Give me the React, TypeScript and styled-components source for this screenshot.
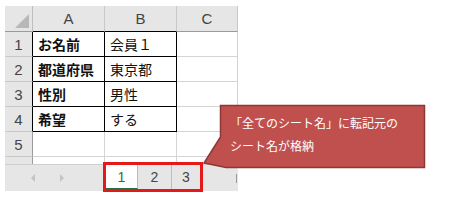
import styled, { createGlobalStyle } from 'styled-components';

const GlobalStyle = createGlobalStyle`
  html, body {
    margin: 0;
    padding: 0;
    background: #ffffff;
  }
`;

const COLUMNS = ['A', 'B', 'C'];

const ROWS: { label: string; values: string[] }[] = [
  { label: '1', values: ['お名前', '会員１', ''] },
  { label: '2', values: ['都道府県', '東京都', ''] },
  { label: '3', values: ['性別', '男性', ''] },
  { label: '4', values: ['希望', 'する', ''] },
  { label: '5', values: ['', '', ''] },
];

const SHEETS = [
  { name: '1', width: 32 },
  { name: '2', width: 34 },
  { name: '3', width: 28 },
];

const isBoxed = (row: number, col: number) => row < 4 && col < 2;

const App = () => {
  return (
    <>
      <GlobalStyle />
      <Page>
        <Sheet>
          <Grid>
            <CornerCell />
            {COLUMNS.map((col, c) => (
              <ColHeader key={col} $boxed={c < 2}>
                {col}
              </ColHeader>
            ))}

            {ROWS.map((row, r) => (
              <Row key={row.label} row={row} index={r} />
            ))}

            <PartialHeader />
            {COLUMNS.map((col) => (
              <PartialCell key={col} />
            ))}
          </Grid>

          <TabBar>
            <NavArea>
              <NavArrow $dir="left" />
              <NavArrow $dir="right" />
            </NavArea>
            <TabGroup>
              {SHEETS.map((sheet, i) => (
                <Tab key={sheet.name} $active={i === 0} $width={sheet.width}>
                  {sheet.name}
                </Tab>
              ))}
            </TabGroup>
            <TabFiller>
              <Splitter />
            </TabFiller>
          </TabBar>
        </Sheet>

        <Callout>
          <CalloutShape width="224" height="66" viewBox="0 0 224 66">
            <path
              d="M17.5 1.5 H221.5 V63.5 H23 L1 59 L17.5 33 Z"
              fill="#c0504d"
              stroke="#8c3836"
              strokeWidth="1.5"
              strokeLinejoin="miter"
            />
          </CalloutShape>
          <CalloutText>
            <CalloutLine>「全てのシート名」に転記元の</CalloutLine>
            <CalloutLine>シート名が格納</CalloutLine>
          </CalloutText>
        </Callout>
      </Page>
    </>
  );
};

const Row = ({ row, index }: { row: { label: string; values: string[] }; index: number }) => (
  <>
    <RowHeader $boxed={index < 4}>{row.label}</RowHeader>
    {row.values.map((value, c) => (
      <Cell key={c} $boxed={isBoxed(index, c)} $bold={c === 0}>
        {value}
      </Cell>
    ))}
  </>
);

const Page = styled.div`
  position: relative;
  width: 453px;
  height: 201px;
  padding: 6px 0 0 5px;
  box-sizing: border-box;
  overflow: hidden;
  font-family: 'Noto Sans CJK JP', 'Liberation Sans', sans-serif;
`;

const Sheet = styled.div`
  width: 233px;
  display: flex;
  flex-direction: column;
`;

const Grid = styled.div`
  display: grid;
  grid-template-columns: 28px 72px 72px 61px;
  grid-template-rows: 26px repeat(5, 25px) 7px;
`;

const HeaderBase = styled.div`
  box-sizing: border-box;
  background: #e6e6e6;
  color: #444444;
  font-family: 'Liberation Sans', 'Noto Sans CJK JP', sans-serif;
  font-size: 15px;
  display: flex;
  align-items: center;
  justify-content: center;
`;

const CornerCell = styled(HeaderBase)`
  position: relative;
  border-right: 1px solid #bdbdbd;
  border-bottom: 1px solid #9b9b9b;

  &::after {
    content: '';
    position: absolute;
    right: 3px;
    bottom: 3px;
    width: 14px;
    height: 14px;
    background: #b8b8b8;
    clip-path: polygon(100% 0, 100% 100%, 0 100%);
  }
`;

const ColHeader = styled(HeaderBase)<{ $boxed: boolean }>`
  border-right: 1px solid #c8c8c8;
  border-bottom: 1px solid ${({ $boxed }) => ($boxed ? '#000000' : '#9b9b9b')};
`;

const RowHeader = styled(HeaderBase)<{ $boxed: boolean }>`
  border-right: 1px solid ${({ $boxed }) => ($boxed ? '#000000' : '#9b9b9b')};
  border-bottom: 1px solid #c8c8c8;
`;

const PartialHeader = styled.div`
  background: #e6e6e6;
  border-right: 1px solid #9b9b9b;
`;

const Cell = styled.div<{ $boxed: boolean; $bold: boolean }>`
  box-sizing: border-box;
  display: flex;
  align-items: center;
  padding: 0 0 1px 5px;
  background: #ffffff;
  color: #111111;
  font-size: 14px;
  font-weight: ${({ $bold }) => ($bold ? 700 : 400)};
  white-space: nowrap;
  border-right: 1px solid ${({ $boxed }) => ($boxed ? '#000000' : '#d4d4d4')};
  border-bottom: 1px solid ${({ $boxed }) => ($boxed ? '#000000' : '#d4d4d4')};
`;

const PartialCell = styled.div`
  background: #ffffff;
  border-right: 1px solid #d4d4d4;
`;

const TabBar = styled.div`
  height: 27px;
  display: flex;
  background: #e6e6e6;
  border-top: 1px solid #cfcfcf;
  box-sizing: border-box;
`;

const NavArea = styled.div`
  width: 98px;
  display: flex;
  align-items: center;
  gap: 25px;
  padding-left: 26px;
  box-sizing: border-box;
`;

const NavArrow = styled.span<{ $dir: 'left' | 'right' }>`
  width: 0;
  height: 0;
  border-top: 4px solid transparent;
  border-bottom: 4px solid transparent;
  ${({ $dir }) =>
    $dir === 'left'
      ? 'border-right: 4px solid #c4c4c4;'
      : 'border-left: 4px solid #c4c4c4;'}
`;

const TabGroup = styled.div`
  display: flex;
  width: 100px;
  height: 30px;
  margin-top: -3px;
  box-sizing: border-box;
  border: 3px solid #e5191c;
`;

const Tab = styled.div<{ $active: boolean; $width: number }>`
  width: ${({ $width }) => $width}px;
  display: flex;
  align-items: center;
  justify-content: center;
  box-sizing: border-box;
  font-family: 'Liberation Sans', 'Noto Sans CJK JP', sans-serif;
  font-size: 14px;
  color: ${({ $active }) => ($active ? '#217346' : '#444444')};
  background: ${({ $active }) => ($active ? '#ffffff' : '#e6e6e6')};
  border-bottom: ${({ $active }) => ($active ? '1px solid #217346' : 'none')};
  border-right: 1px solid #bdbdbd;

  &:last-child {
    border-right: none;
  }
`;

const TabFiller = styled.div`
  flex: 1;
  display: flex;
  align-items: center;
  justify-content: flex-end;
  padding-right: 1px;
`;

const Splitter = styled.span`
  width: 1px;
  height: 9px;
  background: #9a9a9a;
`;

const Callout = styled.div`
  position: absolute;
  left: 203px;
  top: 104px;
  width: 224px;
  height: 66px;
`;

const CalloutShape = styled.svg`
  position: absolute;
  inset: 0;
  overflow: visible;
`;

const CalloutText = styled.div`
  position: relative;
  padding: 7px 0 0 27px;
  display: flex;
  flex-direction: column;
  color: #ffffff;
  font-family: 'Noto Sans CJK JP', sans-serif;
  font-size: 12px;
  line-height: 23px;
`;

const CalloutLine = styled.span`
  white-space: nowrap;
`;

export default App;
